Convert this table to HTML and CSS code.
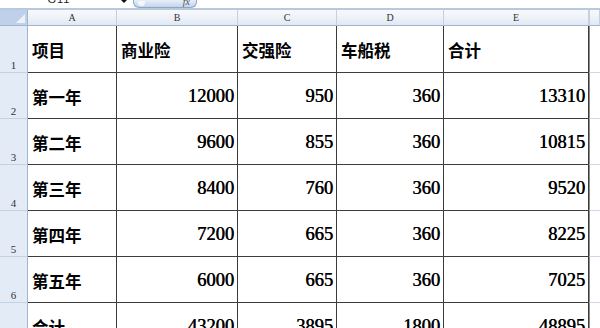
FILE: index.html
```html
<!DOCTYPE html>
<html lang="zh-CN">
<head>
<meta charset="utf-8">
<title>保险费用表</title>
<link rel="stylesheet" href="styles.css">
</head>
<body>
<div class="fbar">
  <div class="namebox"><span class="nametext">G11</span></div>
  <div class="dd"></div>
  <div class="fxbtn"><span class="knob"></span><span class="fx">fx</span></div>
  <div class="finput"></div>
</div>
<div class="sheet">
  <div class="corner"><span class="tri"></span></div>
  <div class="ch">A</div>
  <div class="ch">B</div>
  <div class="ch">C</div>
  <div class="ch">D</div>
  <div class="ch">E</div>
  <div class="ch ch-last"></div>

  <div class="rh">1</div>
  <div class="c t">项目</div>
  <div class="c t">商业险</div>
  <div class="c t">交强险</div>
  <div class="c t">车船税</div>
  <div class="c t">合计</div>
  <div class="x"></div>

  <div class="rh">2</div>
  <div class="c t">第一年</div>
  <div class="c n">12000</div>
  <div class="c n">950</div>
  <div class="c n">360</div>
  <div class="c n">13310</div>
  <div class="x"></div>

  <div class="rh">3</div>
  <div class="c t">第二年</div>
  <div class="c n">9600</div>
  <div class="c n">855</div>
  <div class="c n">360</div>
  <div class="c n">10815</div>
  <div class="x"></div>

  <div class="rh">4</div>
  <div class="c t">第三年</div>
  <div class="c n">8400</div>
  <div class="c n">760</div>
  <div class="c n">360</div>
  <div class="c n">9520</div>
  <div class="x"></div>

  <div class="rh">5</div>
  <div class="c t">第四年</div>
  <div class="c n">7200</div>
  <div class="c n">665</div>
  <div class="c n">360</div>
  <div class="c n">8225</div>
  <div class="x"></div>

  <div class="rh">6</div>
  <div class="c t">第五年</div>
  <div class="c n">6000</div>
  <div class="c n">665</div>
  <div class="c n">360</div>
  <div class="c n">7025</div>
  <div class="x"></div>

  <div class="rh">7</div>
  <div class="c t">合计</div>
  <div class="c n">43200</div>
  <div class="c n">3895</div>
  <div class="c n">1800</div>
  <div class="c n">48895</div>
  <div class="x"></div>
</div>
</body>
</html>
```

FILE: styles.css
```css
html, body {
  margin: 0;
  padding: 0;
  background: #ffffff;
  width: 600px;
  height: 328px;
  overflow: hidden;
}

body {
  font-family: "Liberation Serif", "Noto Sans CJK SC", serif;
}

.fbar {
  display: flex;
  height: 10px;
  box-sizing: border-box;
  border-bottom: 2px solid #b9c9dd;
  background: #ffffff;
}

.namebox {
  width: 118px;
  height: 8px;
  overflow: hidden;
  display: flex;
  justify-content: center;
}

.nametext {
  font-family: "Liberation Sans", sans-serif;
  font-size: 11px;
  line-height: 11px;
  margin-top: -6px;
  color: #222;
  letter-spacing: 1px;
}

.dd {
  width: 0;
  height: 0;
  margin: 0 6px 0 3px;
  border-left: 3px solid transparent;
  border-right: 3px solid transparent;
  border-top: 3px solid #111;
}

.fxbtn {
  width: 64px;
  height: 8px;
  box-sizing: border-box;
  border: 1px solid #8fa6c4;
  border-top: none;
  border-radius: 0 0 6px 6px;
  background: linear-gradient(to bottom, #e8eff9, #c3d4ea);
  display: flex;
  align-items: flex-end;
  justify-content: space-between;
  padding: 0 6px 0 4px;
  overflow: hidden;
}

.knob {
  width: 7px;
  height: 5px;
  border-radius: 0 0 4px 4px;
  background: #f4f7fb;
  margin-bottom: 1px;
}

.fx {
  font-family: "Liberation Serif", serif;
  font-style: italic;
  font-size: 10px;
  line-height: 10px;
  color: #555;
}

.finput {
  flex: 1;
}

.sheet {
  display: grid;
  grid-template-columns: 28px 89px 121px 99px 107px 145px 1fr;
  grid-template-rows: 16px 47px 46px 46px 46px 46px 46px 46px;
}

.corner {
  background: #bed0ea;
  border-right: 1px solid #9eb6ce;
  border-bottom: 1px solid #9eb6ce;
  box-sizing: border-box;
  display: flex;
  justify-content: flex-end;
  align-items: flex-end;
  padding: 0 2px 2px 0;
}

.tri {
  width: 0;
  height: 0;
  border-left: 9px solid transparent;
  border-bottom: 9px solid #eef2f8;
}

.ch {
  box-sizing: border-box;
  background: linear-gradient(to bottom, #f7f9fc 0%, #eef2f8 50%, #e1e8f2 100%);
  border-right: 1px solid #c4d1e2;
  border-bottom: 1px solid #9eb6ce;
  font-family: "Liberation Serif", serif;
  font-size: 10px;
  color: #333;
  display: flex;
  align-items: center;
  justify-content: center;
  line-height: 1;
}

.ch-last {
  border-left: 1px solid #c4d1e2;
}

.rh {
  box-sizing: border-box;
  background: #e3ebf6;
  border-right: 1px solid #9eb6ce;
  border-bottom: 1px solid #c4d1e2;
  font-family: "Liberation Serif", serif;
  font-size: 11px;
  color: #333;
  display: flex;
  align-items: flex-end;
  justify-content: center;
  padding-bottom: 1px;
  line-height: 1;
}

.c {
  box-sizing: border-box;
  border-right: 1px solid #3c3c3c;
  border-bottom: 1px solid #3c3c3c;
  display: flex;
  align-items: center;
  color: #000;
  white-space: nowrap;
}

.t {
  font-family: "Noto Sans CJK SC", sans-serif;
  font-weight: 700;
  font-size: 16.5px;
  padding-left: 4px;
  padding-top: 2px;
}

.n {
  font-family: "Liberation Serif", serif;
  font-weight: 400;
  text-shadow: 0.6px 0 0 #000;
  font-size: 18.5px;
  justify-content: flex-end;
  padding-right: 3px;
  padding-top: 2px;
}

.x {
  box-sizing: border-box;
  border-left: 1px solid #8a8a8a;
  border-bottom: 1px solid #d0d7e5;
}
```
